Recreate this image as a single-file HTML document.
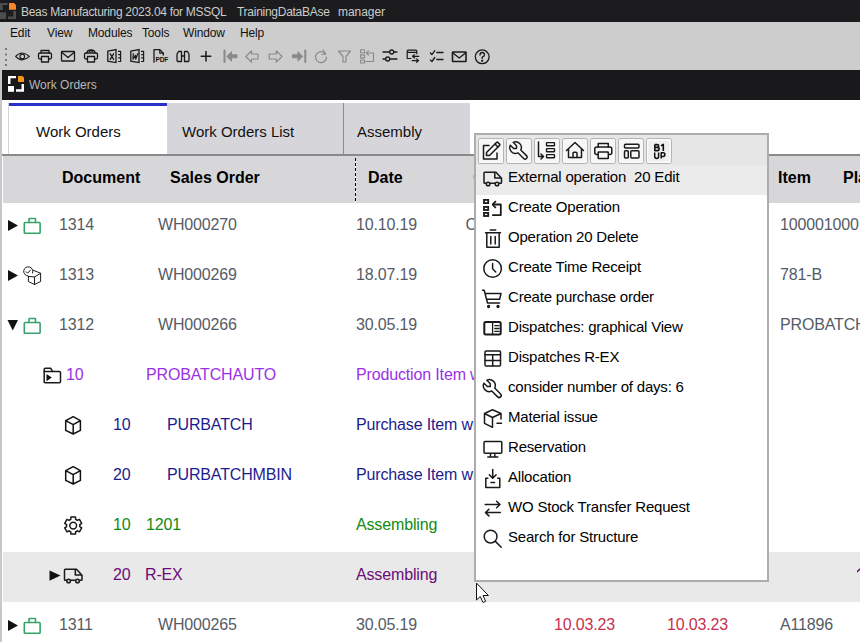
<!DOCTYPE html>
<html><head><meta charset="utf-8">
<style>
*{margin:0;padding:0;box-sizing:border-box}
html,body{width:860px;height:642px;overflow:hidden;background:#fff;font-family:"Liberation Sans",sans-serif}
.a{position:absolute}
.t{position:absolute;white-space:pre;line-height:1}
#title{left:0;top:0;width:860px;height:22px;background:#1c1c1e}
#menubar{left:0;top:22px;width:860px;height:48px;background:#cdcdcd}
#hdr{left:2px;top:70px;width:858px;height:30px;background:#19191b}
#lb{left:0;top:70px;width:2px;height:572px;background:#c8c8c8}
.tt{top:6px;font-size:12px;color:#cccccc}
.mb{font-size:12px;color:#111;top:27px;letter-spacing:-0.15px}
.g{font-size:16px;letter-spacing:-0.15px}
.c0{color:#555b66}
.cv{color:#9b30e6}
.cb{color:#1c1c8e}
.cg{color:#128a12}
.cp{color:#6c0c78}
.cr{color:#c9304e}
svg{position:absolute;overflow:visible}
.mi{left:508px;font-size:15px;letter-spacing:-0.2px;color:#000}
</style></head><body>
<div id="title" class="a"></div>
<div id="menubar" class="a"></div>
<div id="hdr" class="a"></div>
<div id="lb" class="a"></div>

<!-- title -->
<div class="t tt" style="left:21px;letter-spacing:-0.3px">Beas Manufacturing 2023.04 for MSSQL</div>
<div class="t tt" style="left:237px;letter-spacing:-0.27px">TrainingDataBAse</div>
<div class="t tt" style="left:338px;letter-spacing:-0.05px">manager</div>

<!-- menu -->
<div class="t mb" style="left:10px">Edit</div>
<div class="t mb" style="left:47px">View</div>
<div class="t mb" style="left:88px">Modules</div>
<div class="t mb" style="left:142px">Tools</div>
<div class="t mb" style="left:183px">Window</div>
<div class="t mb" style="left:240px">Help</div>

<!-- work orders header -->
<div class="t" style="left:29px;top:79px;font-size:12px;color:#b8b8b8">Work Orders</div>

<!-- tabs -->
<div class="a" style="left:8px;top:103px;width:159px;height:51px;background:#fff;border-left:1px solid #d4d4d4"></div>
<div class="a" style="left:9px;top:103px;width:158px;height:3px;background:#2a30c8"></div>
<div class="a" style="left:167px;top:103px;width:303px;height:51px;background:#d6d6da"></div>
<div class="a" style="left:343px;top:103px;width:1px;height:51px;background:#8a8a8a"></div>
<div class="t" style="left:36px;top:124px;font-size:15px;color:#111">Work Orders</div>
<div class="t" style="left:182px;top:124px;font-size:15px;color:#111">Work Orders List</div>
<div class="t" style="left:357px;top:124px;font-size:15px;color:#111">Assembly</div>

<!-- grid header -->
<div class="a" style="left:2px;top:154px;width:858px;height:2px;background:#8a8a8a"></div>
<div class="a" style="left:3px;top:156px;width:857px;height:47px;background:#d7d7da"></div>
<div class="a" style="left:355px;top:158px;width:1px;height:45px;background:repeating-linear-gradient(#000 0 3px,#fff 3px 5px)"></div>
<div class="t" style="left:62px;top:170px;font-size:16px;font-weight:bold;color:#000">Document</div>
<div class="t" style="left:170px;top:170px;font-size:16px;font-weight:bold;color:#000">Sales Order</div>
<div class="t" style="left:368px;top:170px;font-size:16px;font-weight:bold;color:#000">Date</div>
<div class="t" style="left:778px;top:170px;font-size:16px;font-weight:bold;color:#000">Item</div>
<div class="t" style="left:843px;top:170px;font-size:16px;font-weight:bold;color:#000">Planned</div>

<div class="a" style="left:473px;top:175px;width:1px;height:4px;background:#e0b060"></div>
<!-- highlighted row -->
<div class="a" style="left:3px;top:552px;width:857px;height:50px;background:#e9e9e9"></div>

<!-- rows -->
<div class="t g c0" style="left:59px;top:217px">1314</div>
<div class="t g c0" style="left:158px;top:217px">WH000270</div>
<div class="t g c0" style="left:356px;top:217px">10.10.19</div>
<div class="t g c0" style="left:465.5px;top:217px">C</div>
<div class="t g c0" style="left:780px;top:217px">100001000</div>

<div class="t g c0" style="left:59px;top:267px">1313</div>
<div class="t g c0" style="left:158px;top:267px">WH000269</div>
<div class="t g c0" style="left:356px;top:267px">18.07.19</div>
<div class="t g c0" style="left:780px;top:267px">781-B</div>

<div class="t g c0" style="left:59px;top:317px">1312</div>
<div class="t g c0" style="left:158px;top:317px">WH000266</div>
<div class="t g c0" style="left:356px;top:317px">30.05.19</div>
<div class="t g c0" style="left:780px;top:317px">PROBATCH</div>

<div class="t g cv" style="left:66px;top:367px">10</div>
<div class="t g cv" style="left:146px;top:367px">PROBATCHAUTO</div>
<div class="t g cv" style="left:356px;top:367px">Production Item w</div>

<div class="t g cb" style="left:113px;top:417px">10</div>
<div class="t g cb" style="left:167px;top:417px">PURBATCH</div>
<div class="t g cb" style="left:356px;top:417px">Purchase Item wi</div>

<div class="t g cb" style="left:113px;top:467px">20</div>
<div class="t g cb" style="left:167px;top:467px">PURBATCHMBIN</div>
<div class="t g cb" style="left:356px;top:467px">Purchase Item wi</div>

<div class="t g cg" style="left:113px;top:517px">10</div>
<div class="t g cg" style="left:146px;top:517px">1201</div>
<div class="t g cg" style="left:356px;top:517px">Assembling</div>

<div class="t g cp" style="left:113px;top:567px">20</div>
<div class="t g cp" style="left:145px;top:567px">R-EX</div>
<div class="t g cp" style="left:356px;top:567px">Assembling</div>
<div class="a" style="left:857px;top:569px;width:4px;height:2px;background:#6c0c78;transform:skewY(-40deg)"></div>

<div class="t g c0" style="left:59px;top:617px">1311</div>
<div class="t g c0" style="left:158px;top:617px">WH000265</div>
<div class="t g c0" style="left:356px;top:617px">30.05.19</div>
<div class="t g cr" style="left:554px;top:617px">10.03.23</div>
<div class="t g cr" style="left:667px;top:617px">10.03.23</div>
<div class="t g c0" style="left:780px;top:617px">A11896</div>

<svg class="a" style="left:0;top:0" width="860" height="642" viewBox="0 0 860 642" fill="none" stroke-linecap="round" stroke-linejoin="round">
<!-- title logo -->
<g fill="#4d4d4d" stroke="none">
<path d="M0 3H7.5V5H2.7V10H0Z"/>
<rect x="0" y="12.3" width="6" height="6.7"/>
<path d="M16 11V19H8V16.5H13.3V11Z"/>
</g>
<path d="M9 3H13.5Q16 3.5 16 6.5V9.8H9Z" fill="#f5862a" stroke="none"/>
<!-- work orders logo -->
<g fill="#fff" stroke="none">
<path d="M8 76H16V78.3H10.5V84H8Z"/>
<rect x="8" y="86" width="6" height="5.8"/>
<path d="M24 84V91.8H16V89.2H21.5V84Z"/>
</g>
<path d="M18 76H22.5L24 77.5V82H18Z" fill="#f7941d" stroke="none"/>

<!-- toolbar dots -->
<g fill="#7a7a7a" stroke="none">
<rect x="5" y="48" width="2" height="2"/><rect x="5" y="53.5" width="2" height="2"/><rect x="5" y="59" width="2" height="2"/><rect x="5" y="64" width="2" height="2"/>
</g>
<g stroke="#1a1a1a" stroke-width="1.3">
<!-- eye -->
<path d="M15.6 56.4Q22 49.5 29.4 56.4Q22 63.3 15.6 56.4Z" stroke-width="1.1"/>
<circle cx="22.3" cy="56.4" r="2.3" stroke-width="1.1"/>
<!-- printer -->
<path d="M41 53V50.5H49V53"/><rect x="38.5" y="53" width="13" height="6" rx="1.5"/><rect x="41.5" y="56.5" width="7" height="5.5" fill="#d3d3d3"/>
<!-- mail -->
<rect x="61.5" y="51.5" width="13" height="9.5" rx="0.5"/><path d="M62 52.5L68 57.5L74 52.5"/>
<!-- printer2 -->
<path d="M87 53Q87 50 91 50Q95 50 95 53"/><path d="M89.5 51.5L91 50.5L92.5 51.5" /><rect x="84.5" y="53" width="13" height="6" rx="1.5"/><rect x="87.5" y="56.5" width="7" height="5.5" fill="#d3d3d3"/>
<!-- excel -->
<path d="M107.8 51.2L116 49.6V62.6L107.8 61.2Z" stroke-width="1.3" stroke-linejoin="miter"/><path d="M118 51.3H120.6V61.5H118M118.2 54.6H120.6M118.2 57.9H120.6" stroke-width="1.2" stroke-linecap="butt"/><path d="M110.2 53.8L113.6 59.3M113.6 53.8L110.2 59.3" stroke-width="1.3"/>
<!-- word -->
<path d="M130.8 51.2L139 49.6V62.6L130.8 61.2Z" stroke-width="1.3" stroke-linejoin="miter"/><path d="M141 51.3H143.6V61.5H141M141.2 54.6H143.6M141.2 57.9H143.6" stroke-width="1.2" stroke-linecap="butt"/><path d="M133.3 53.5L133 59.2L135.4 55.2L135.7 59.2L137.8 53.5" stroke-width="1.2"/>
<!-- pdf -->
<path d="M154 62.2V49.6H159.8L163.3 53.1V55"/><path d="M159.8 49.8V53.1H163.2"/>
<text x="155.6" y="62.4" font-family="Liberation Sans" font-size="6.6" font-weight="bold" letter-spacing="-0.3" fill="#111" stroke="none">PDF</text>
<!-- binoculars -->
<path d="M177 60.5V54L178.5 51.5H181.5V61.5H177.5Z"/><path d="M189 60.5V54L187.5 51.5H184.5V61.5H188.5Z"/><path d="M181.5 56H184.5"/>
<!-- plus -->
<path d="M206 51.5V61M201.2 56.3H210.8" stroke-width="1.5"/>
</g>
<g stroke="#8a8a8a" stroke-width="1.5" fill="none">
<!-- first -->
<path d="M224.5 50.5V62" stroke-width="2"/>
<path d="M227 56.3L231.5 51.8V54.8H237V57.8H231.5V60.8Z" fill="#8a8a8a" stroke-width="1"/>
<!-- prev -->
<path d="M245.8 56.5L251.5 50.8V54H258V59H251.5V62.2Z" stroke-width="1.2"/>
<!-- next -->
<path d="M282 56.5L276.3 50.8V54H269.2V59H276.3V62.2Z" stroke-width="1.2"/>
<!-- last -->
<path d="M305.3 50.5V62" stroke-width="2"/>
<path d="M302.5 56.3L298 51.8V54.8H292.5V57.8H298V60.8Z" fill="#8a8a8a" stroke-width="1"/>
<!-- refresh -->
<path d="M325.5 54A5.5 5.5 0 1 0 326.5 57" stroke-width="1.2"/><path d="M323 50L325.8 53.8L321.8 54.5" stroke-width="1.2"/>
<!-- filter -->
<path d="M338.5 51H350.5L346 56.5V62H343V56.5Z" stroke-width="1.2"/>
<!-- list arrow -->
<rect x="360.5" y="49.8" width="4" height="3" stroke-width="1.1"/><rect x="360.5" y="54.9" width="4" height="3" stroke-width="1.1"/><rect x="360.5" y="60" width="4" height="3" stroke-width="1.1"/>
<path d="M366.5 53H373.5V61.5H366" stroke-width="1.2"/><path d="M368.5 50.8L366.3 53L368.5 55.2" stroke-width="1.2"/>
</g>
<g stroke="#1a1a1a" stroke-width="1.3">
<!-- sliders -->
<path d="M383 52H389.5M394 52H397M383 59H385.5M390 59H397"/><circle cx="391.7" cy="52" r="2"/><circle cx="387.7" cy="59" r="2"/>
<!-- window arrows -->
<path d="M411 58.5H407.2V51.2Q407.2 50.2 408.2 50.2H415.8Q416.8 50.2 416.8 51.2V53.8M407.2 52.3H416.8" stroke-width="1.2"/><path d="M412.5 56.3H418.8M414.5 54.6L412.5 56.3L414.5 58M412.2 60.6H418.6M416.6 58.9L418.6 60.6L416.6 62.3" stroke-width="1.2"/>
<!-- checklist -->
<path d="M430.4 53L431.9 54.6L434.8 50.6M430.4 59.9L431.9 61.5L434.8 57.5M436.8 52.5H443M436.8 59.5H443"/>
<!-- mail -->
<rect x="452.5" y="52" width="13.5" height="9.5" rx="0.5" stroke-width="1.6"/><path d="M453 53L459.2 58L465.5 53" stroke-width="1.3"/>
<!-- help -->
<circle cx="482.2" cy="56.8" r="6.9"/><path d="M480 55Q480 52.5 482.2 52.5Q484.5 52.5 484.5 54.8Q484.5 56.3 482.2 57.2V58.5"/><circle cx="482.2" cy="60.8" r="0.5" fill="#1a1a1a"/>
</g>

<!-- row expanders -->
<g fill="#111" stroke="none">
<path d="M8 220L18 225.5L8 231Z"/>
<path d="M8 270L18 275.5L8 281Z"/>
<path d="M7.5 320H18L12.75 330.5Z"/>
<path d="M8 620L18 625.5L8 631Z"/>
<path d="M49.5 570.5L60.5 575.6L49.5 580.7Z"/>
</g>
<!-- briefcases -->
<g stroke="#35a36a" stroke-width="1.6" stroke-linejoin="round">
<rect x="24.3" y="222.5" width="15.8" height="10.7" rx="0.8"/><path d="M29 222.5V219Q29 218.5 29.5 218.5H35Q35.5 218.5 35.5 219V222.5"/>
<rect x="24.3" y="322.5" width="15.8" height="10.7" rx="0.8"/><path d="M29 322.5V319Q29 318.5 29.5 318.5H35Q35.5 318.5 35.5 319V322.5"/>
<rect x="24.3" y="622.5" width="15.8" height="10.7" rx="0.8"/><path d="M29 622.5V619Q29 618.5 29.5 618.5H35Q35.5 618.5 35.5 619V622.5"/>
</g>
<!-- box-check -->
<g stroke="#1a1a1a" stroke-width="1">
<path d="M28 276A4.6 4.6 0 1 1 32.6 273"/>
<path d="M26.2 271.8L27.6 273.2L30.3 270.2"/>
<path d="M33.5 270.3L40.6 273.3L34.5 277L28.4 276.4"/>
<path d="M28.4 276.4V281.5L34.5 284.5L40.6 281.5V273.3M34.5 277V284.5" />
</g>
<!-- folder -->
<g stroke="#1a1a1a" stroke-width="1.5">
<path d="M44.2 382.5V369.5Q44.2 368.3 45.4 368.3H50.8L52.6 371.5H59.4Q60.5 371.5 60.5 372.6V381.6Q60.5 382.7 59.4 382.7H45.3Q44.2 382.7 44.2 381.6Z"/>
<path d="M44.2 371.5H52.6"/>
</g>
<path d="M46.5 374L51.8 377.6L46.5 381.2Z" fill="#111"/>
<!-- cubes -->
<g stroke="#111" stroke-width="1.5">
<path d="M73.2 416.7L80.4 420.7V430.4L73.2 434L65.7 430.4V420.7Z M65.7 420.7L73.2 424.7L80.4 420.7M73.2 424.7V434"/>
<path d="M73.2 466.7L80.4 470.7V480.4L73.2 484L65.7 480.4V470.7Z M65.7 470.7L73.2 474.7L80.4 470.7M73.2 474.7V484"/>
</g>
<!-- gear -->
<g stroke="#1a1a1a" stroke-width="1.5">
<path d="M69.80 519.71 L70.73 519.48 L70.92 517.10 L75.48 517.10 L75.67 519.48 L76.60 519.71 L77.26 520.40 L79.42 519.38 L81.70 523.32 L79.74 524.68 L80.00 525.60 L79.74 526.52 L81.70 527.88 L79.42 531.82 L77.26 530.80 L76.60 531.49 L75.67 531.72 L75.48 534.10 L70.92 534.10 L70.73 531.72 L69.80 531.49 L69.14 530.80 L66.98 531.82 L64.70 527.88 L66.66 526.52 L66.40 525.60 L66.66 524.68 L64.70 523.32 L66.98 519.38 L69.14 520.40 Z"/>
<circle cx="73.2" cy="525.6" r="3.4"/>
</g>
<!-- trucks -->
<g id="truck" stroke="#1a1a1a" stroke-width="1.5">
<path d="M486.3 183.3H484.8Q484 183.3 484 182.5V173.1Q484 172.3 484.8 172.3H496L501.5 178.3V182.5Q501.5 183.3 500.7 183.3H499.3M490 183.3H494.8"/>
<path d="M494.8 172.5V178H501"/>
<circle cx="488.1" cy="184" r="1.8"/><circle cx="497" cy="184" r="1.8"/>
</g>
<g transform="translate(-419.5 397)" stroke="#1a1a1a" stroke-width="1.5">
<path d="M486.3 183.3H484.8Q484 183.3 484 182.5V173.1Q484 172.3 484.8 172.3H496L501.5 178.3V182.5Q501.5 183.3 500.7 183.3H499.3M490 183.3H494.8"/>
<path d="M494.8 172.5V178H501"/>
<circle cx="488.1" cy="184" r="1.8"/><circle cx="497" cy="184" r="1.8"/>
</g>
</svg>

<!-- context menu -->
<div class="a" id="cm" style="left:474px;top:133px;width:295px;height:449px;background:#fff;border:2px solid #adadad"></div>
<div class="a" style="left:476px;top:135px;width:291px;height:30px;background:#e6e6e6"></div>
<div class="a" style="left:476px;top:165px;width:291px;height:30px;background:#ebebeb"></div>

<svg class="a" style="left:0;top:0" width="860" height="642" viewBox="0 0 860 642" fill="none" stroke-linecap="round" stroke-linejoin="round">
<!-- menu toolbar buttons -->
<g stroke="#b4b4b4" stroke-width="1" fill="#f7f7f7">
<rect x="478.5" y="138.5" width="25" height="25" rx="1"/>
<rect x="506.5" y="138.5" width="25" height="25" rx="2"/>
<rect x="534.5" y="138.5" width="25" height="25" rx="2"/>
<rect x="562.5" y="138.5" width="25" height="25" rx="2"/>
<rect x="590.5" y="138.5" width="25" height="25" rx="2"/>
<rect x="618.5" y="138.5" width="25" height="25" rx="2"/>
<rect x="646.5" y="138.5" width="25" height="25" rx="2"/>
</g>
<g stroke="#1a1a1a" stroke-width="1.5">
<!-- edit -->
<path d="M489 145.5H483.5V159H497V153"/>
<path d="M486.5 155.5V152.5L496.5 142.5Q497.2 141.8 497.9 142.5L499.5 144.1Q500.2 144.8 499.5 145.5L489.5 155.5Z"/>
<path d="M495 144L498 147"/>
<!-- wrench btn -->
<path transform="translate(507 139) scale(0.95)" d="M7 10h3v-3l-3.5 -3.5a6 6 0 0 1 8 8l6 6a2 2 0 0 1 -3 3l-6 -6a6 6 0 0 1 -8 -8l3.5 3.5"/>
<!-- sort list -->
<path d="M538.5 142V156.5H543M541 154L543.5 156.5L541 159"/>
<rect x="546.5" y="142.6" width="8" height="3.2" rx="0.6" stroke-width="1.4"/>
<rect x="546.5" y="148.6" width="8" height="3.2" rx="0.6" stroke-width="1.4"/>
<rect x="546.5" y="154.6" width="8" height="3.2" rx="0.6" stroke-width="1.4"/>
<!-- house -->
<path d="M566.5 150.5L575 142.5L583.5 150.5M568.5 148.5V157.5H581.5V148.5"/>
<path d="M573 157.5V153.2Q573 152.2 574 152.2H576Q577 152.2 577 153.2V157.5"/>
<!-- printer -->
<path d="M598.2 147V143.5H608.3V147"/>
<rect x="594.8" y="147" width="17" height="7.5" rx="2"/>
<rect x="598.2" y="152" width="10.1" height="6.5" rx="0.5" fill="#f7f7f7"/>
<!-- layout -->
<rect x="624.5" y="144.2" width="14.5" height="3.8" rx="1"/>
<rect x="624.5" y="150.8" width="3.8" height="7.2" rx="1"/>
<rect x="630.8" y="150.8" width="8.2" height="7.2" rx="1"/>
</g>
<rect x="648" y="140" width="22" height="22" fill="#efefef" stroke="#fdfdfd" stroke-width="1"/>
<g stroke="#111" stroke-width="1.6" stroke-linecap="butt" stroke-linejoin="round">
<path d="M654.8 144.6V150.6H657.3Q659.1 150.6 659.1 148.9Q659.1 147.4 657.3 147.4H654.8M654.8 144.6H657Q658.7 144.6 658.7 146Q658.7 147.4 657 147.4"/>
<path d="M661 145.9L663.3 144.4V151"/>
<path d="M654.7 152.4V156.6Q654.7 158.4 656.7 158.4Q658.6 158.4 658.6 156.6V152.4" stroke-width="1.5"/>
<path d="M661.2 158.6V152.8H663.2Q664.9 152.8 664.9 154.6Q664.9 156.4 663.2 156.4H661.2" stroke-width="1.5"/>
</g>

<!-- menu item icons -->
<g stroke="#1a1a1a" stroke-width="1.5">
<!-- truck -->
<path d="M486.3 183.3H484.8Q484 183.3 484 182.5V173.1Q484 172.3 484.8 172.3H496L501.5 178.3V182.5Q501.5 183.3 500.7 183.3H499.3M490 183.3H494.8"/>
<path d="M494.8 172.5V178H501"/>
<circle cx="488.1" cy="184" r="1.8"/><circle cx="497" cy="184" r="1.8"/>
<!-- create operation -->
<rect x="484" y="199.9" width="4.2" height="3.2" stroke-width="1.8" stroke-linejoin="miter"/>
<rect x="484" y="206.9" width="4.2" height="3.1" stroke-width="1.8" stroke-linejoin="miter"/>
<rect x="484" y="212.9" width="4.2" height="3.1" stroke-width="1.8" stroke-linejoin="miter"/>
<path d="M493 204.5H500.8V215.1H492.8" stroke-width="1.8"/>
<path d="M495.5 201.5Q493.5 203 492.6 204.6Q493.5 206 495.5 207.5" stroke-width="1.6"/>
<!-- trash -->
<path d="M485.5 232.8H500.5M490.3 230H495.7M486.8 233V247.2H499.2V233M490.8 236.5V244M495.2 236.5V244"/>
<!-- clock -->
<circle cx="492.6" cy="268.5" r="8.8"/>
<path d="M492.6 263.5V268.8L495.8 272"/>
<!-- cart -->
<path d="M482.5 290.3H484.2L487.5 303H499.5M485.6 293.6H501L499.6 299.2H487"/>
<circle cx="488.6" cy="306.5" r="0.9" fill="#1a1a1a"/><circle cx="498" cy="306.5" r="0.9" fill="#1a1a1a"/>
<!-- dispatch view -->
<rect x="484.3" y="322" width="16.4" height="12.6" rx="1.5" stroke-width="2"/>
<path d="M492.6 322V334.6M494.8 325.6H499M494.8 328.5H499M494.8 331.4H499" stroke-width="1.3"/>
<!-- table -->
<rect x="485" y="351" width="15.5" height="15" rx="1"/>
<path d="M485 354.8H500.5M485 360.6H500.5M492.7 354.8V366"/>
<!-- wrench -->
<path transform="translate(480.5 376.8) scale(0.98)" d="M7 10h3v-3l-3.5 -3.5a6 6 0 0 1 8 8l6 6a2 2 0 0 1 -3 3l-6 -6a6 6 0 0 1 -8 -8l3.5 3.5"/>
<!-- material issue -->
<path d="M501 419V413.5L492.5 409.7L484.5 413.5V423.3L492.5 427.3V417.5L501 413.5M484.5 413.5L492.5 417.5M497 423.3H501.5"/>
<!-- monitor -->
<rect x="484" y="441.5" width="17.8" height="11.8" rx="1"/>
<path d="M490.5 453.5V457M494.8 453.5V457M487.8 457H497.8"/>
<!-- allocation -->
<path d="M492.7 469.5V478M489.3 474.8L492.7 478.3L496.1 474.8M487.8 478.3H485.8V487.5H499.8V478.3H497.7M491 482.6H494.5"/>
<!-- arrows -->
<path d="M485.2 504.5H500M496.6 501.2L500 504.5L496.6 507.8M500.3 512.6H485.5M488.9 509.3L485.5 512.6L488.9 515.9"/>
<!-- search -->
<circle cx="490.6" cy="536.6" r="6.4"/>
<path d="M495.4 541.4L501.2 547.2"/>
</g>
<!-- cursor -->
<path d="M476.5 583.5V600L480.3 596.5L483 602.5L485.6 601.3L483 595.5H488Z" fill="#fff" stroke="#111" stroke-width="1" stroke-linejoin="miter"/>
</svg>


<!-- menu texts -->
<div class="t mi" style="top:169px">External operation  20 Edit</div>
<div class="t mi" style="top:199px">Create Operation</div>
<div class="t mi" style="top:229px">Operation 20 Delete</div>
<div class="t mi" style="top:259px">Create Time Receipt</div>
<div class="t mi" style="top:289px">Create purchase order</div>
<div class="t mi" style="top:319px">Dispatches: graphical View</div>
<div class="t mi" style="top:349px">Dispatches R-EX</div>
<div class="t mi" style="top:379px">consider number of days: 6</div>
<div class="t mi" style="top:409px">Material issue</div>
<div class="t mi" style="top:439px">Reservation</div>
<div class="t mi" style="top:469px">Allocation</div>
<div class="t mi" style="top:499px">WO Stock Transfer Request</div>
<div class="t mi" style="top:529px">Search for Structure</div>
</body></html>
